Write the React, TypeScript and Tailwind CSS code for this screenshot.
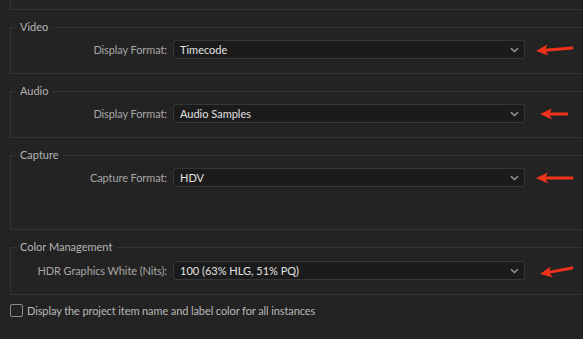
import React from "react";

const font = { fontFamily: 'Lato, "Open Sans", sans-serif' };

function Chevron() {
  return (
    <svg width="9" height="6" viewBox="0 0 9 6" className="shrink-0">
      <path d="M1 1.2 L4.5 4.5 L8 1.2" fill="none" stroke="#9a9a9a" strokeWidth="1.4" />
    </svg>
  );
}

function Arrow({ y1, y2, x1 = 2, x2 = 38 }: { y1: number; y2: number; x1?: number; x2?: number }) {
  const dx = x2 - x1;
  const dy = y2 - y1;
  const len = Math.sqrt(dx * dx + dy * dy);
  const ux = dx / len;
  const uy = dy / len;
  const px = -uy;
  const py = ux;
  const hl = 12;
  const hw = 5.5;
  const bx = x1 + ux * hl;
  const by = y1 + uy * hl;
  const nx = x1 + ux * (hl - 3);
  const ny = y1 + uy * (hl - 3);
  const head = `M${x1} ${y1} L${bx + px * hw} ${by + py * hw} L${nx} ${ny} L${bx - px * hw} ${by - py * hw} Z`;
  return (
    <svg width="42" height="16" viewBox="0 0 42 16" className="shrink-0">
      <line x1={nx} y1={ny} x2={x2} y2={y2} stroke="#f0321a" strokeWidth="2.8" strokeLinecap="round" />
      <path d={head} fill="#f0321a" />
    </svg>
  );
}

function Row({
  label,
  value,
  arrow,
}: {
  label: string;
  value: string;
  arrow: React.ReactNode;
}) {
  return (
    <div className="flex items-center">
      <div className="w-[162px] text-right text-[11px] tracking-[-0.1px] text-[#a6a6a6] pr-[6px] leading-none">{label}</div>
      <div className="w-[352px] h-[19px] bg-[#1b1b1b] border border-[#363636] rounded-[2px] flex items-center justify-between pl-[6px] pr-[5px]">
        <span className="text-[11px] text-[#e2e2e2] leading-none">{value}</span>
        <Chevron />
      </div>
      <div className="ml-[9px]">{arrow}</div>
    </div>
  );
}

function Group({
  title,
  children,
  className,
}: {
  title: string;
  children: React.ReactNode;
  className: string;
}) {
  return (
    <fieldset className={`ml-[10px] w-[600px] border-l border-t border-b border-[#343434] ${className}`}>
      <legend className="ml-[5px] px-[4px] text-[11px] leading-[16px] text-[#b4b4b4]">{title}</legend>
      {children}
    </fieldset>
  );
}

export default function App() {
  return (
    <div className="w-[583px] h-[339px] bg-[#232323] overflow-hidden" style={font}>
      <div className="ml-[10px] w-[600px] h-[10px] border-l border-b border-[#343434]" />
      <Group title="Video" className="mt-[9px] pt-[5px] pb-[14px]">
        <Row label="Display Format:" value="Timecode" arrow={<Arrow y1={9} y2={6} />} />
      </Group>
      <Group title="Audio" className="mt-[9px] pt-[5px] pb-[14px]">
        <Row label="Display Format:" value="Audio Samples" arrow={<Arrow y1={8} y2={8} x1={6} x2={33} />} />
      </Group>
      <Group title="Capture" className="mt-[9px] pt-[5px] pb-[42px]">
        <Row label="Capture Format:" value="HDV" arrow={<Arrow y1={8} y2={8} />} />
      </Group>
      <Group title="Color Management" className="mt-[9px] pt-[6px] pb-[14px]">
        <Row label="HDR Graphics White (Nits):" value="100 (63% HLG, 51% PQ)" arrow={<Arrow y1={11} y2={5} x1={6} x2={38} />} />
      </Group>
      <div className="flex items-center mt-[9px] ml-[10px]">
        <div className="w-[13px] h-[13px] border border-[#8c8c8c] rounded-[2px]" />
        <span className="ml-[4px] text-[11px] tracking-[-0.1px] text-[#b8b8b8] leading-none">
          Display the project item name and label color for all instances
        </span>
      </div>
    </div>
  );
}
